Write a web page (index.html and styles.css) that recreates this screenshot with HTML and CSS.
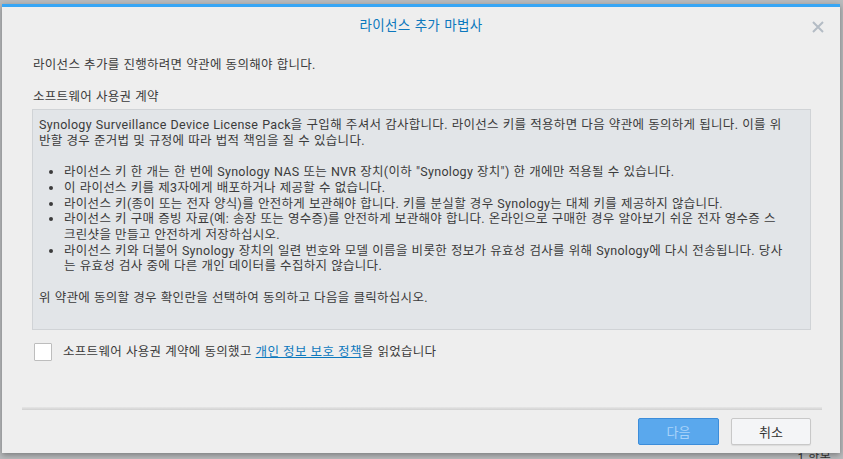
FILE: index.html
```html
<!DOCTYPE html>
<html lang="ko">

<head>
    <meta charset="UTF-8">
    <meta name="viewport" content="width=device-width, initial-scale=1.0">
    <title>라이선스 추가 마법사</title>
    <link rel="stylesheet" href="styles.css">
</head>

<body>
    <div class="wizard">
        <div class="wizard-header">
            <h1>라이선스 추가 마법사</h1>
            <button class="close-btn" type="button" aria-label="닫기">
                <svg width="12" height="12" viewBox="0 0 12 12">
                    <path d="M1 1 L11 11 M11 1 L1 11" stroke="#b4bcc5" stroke-width="2" fill="none" />
                </svg>
            </button>
        </div>

        <div class="wizard-body">
            <p class="intro">라이선스 추가를 진행하려면 약관에 동의해야 합니다.</p>
            <p class="section-title">소프트웨어 사용권 계약</p>

            <div class="eula-box">
                <p>Synology Surveillance Device License Pack을 구입해 주셔서 감사합니다. 라이선스 키를 적용하면 다음 약관에 동의하게 됩니다. 이를 위<br>반할 경우 준거법 및 규정에 따라 법적 책임을 질 수 있습니다.</p>
                <ul>
                    <li>라이선스 키 한 개는 한 번에 Synology NAS 또는 NVR 장치(이하 "Synology 장치") 한 개에만 적용될 수 있습니다.</li>
                    <li>이 라이선스 키를 제3자에게 배포하거나 제공할 수 없습니다.</li>
                    <li>라이선스 키(종이 또는 전자 양식)를 안전하게 보관해야 합니다. 키를 분실할 경우 Synology는 대체 키를 제공하지 않습니다.</li>
                    <li>라이선스 키 구매 증빙 자료(예: 송장 또는 영수증)를 안전하게 보관해야 합니다. 온라인으로 구매한 경우 알아보기 쉬운 전자 영수증 스<br>크린샷을 만들고 안전하게 저장하십시오.</li>
                    <li>라이선스 키와 더불어 Synology 장치의 일련 번호와 모델 이름을 비롯한 정보가 유효성 검사를 위해 Synology에 다시 전송됩니다. 당사<br>는 유효성 검사 중에 다른 개인 데이터를 수집하지 않습니다.</li>
                </ul>
                <p>위 약관에 동의할 경우 확인란을 선택하여 동의하고 다음을 클릭하십시오.</p>
            </div>

            <label class="agree-row">
                <input type="checkbox" class="agree-check">
                <span>소프트웨어 사용권 계약에 동의했고 <a href="#">개인 정보 보호 정책</a>을 읽었습니다</span>
            </label>
        </div>

        <div class="wizard-footer">
            <div class="divider"></div>
            <div class="buttons">
                <button type="button" class="btn btn-next" disabled>다음</button>
                <button type="button" class="btn btn-cancel">취소</button>
            </div>
        </div>
    </div>

    <div class="status-strip">1 항목</div>
</body>

</html>
```

FILE: styles.css
```css
body {
    font-family: Roboto, "Noto Sans CJK KR", sans-serif;
    font-size: 12.5px;
    letter-spacing: 0.3px;
    word-spacing: 0.5px;
    color: #3b3b3b;
    background-color: #b9bbbd;
    margin: 0;
    height: 459px;
    overflow: hidden;
}

.wizard {
    width: 838px;
    height: 449px;
    margin: 4px 0 0 2px;
    background-color: #eeeeee;
    border-top: 3px solid #37a6f5;
    box-sizing: border-box;
    box-shadow: 0 2px 6px rgba(0, 0, 0, 0.35);
    display: flex;
    flex-direction: column;
    position: relative;
    z-index: 1;
}

.wizard-header {
    height: 34px;
    display: flex;
    justify-content: center;
    align-items: center;
}

.wizard-header h1 {
    margin: 0;
    font-size: 13.5px;
    font-weight: normal;
    color: #0c78bd;
    letter-spacing: 0.3px;
}

.close-btn {
    position: absolute;
    top: 14px;
    right: 16px;
    border: none;
    background: none;
    padding: 0;
    width: 12px;
    height: 12px;
    cursor: pointer;
}

.close-btn svg {
    display: block;
}

.wizard-body {
    flex: 1;
    padding: 0 29px 0 30px;
}

.intro {
    margin: 16px 0 0 1px;
    line-height: 16px;
}

.section-title {
    margin: 16px 0 0 1px;
    line-height: 16px;
}

.eula-box {
    margin-top: 4px;
    height: 221px;
    box-sizing: border-box;
    background-color: #e2e5e8;
    border: 1px solid #d0d3d6;
    padding: 7px 6px 0 6px;
    line-height: 15.7px;
    white-space: nowrap;
}

.eula-box p {
    margin: 0;
}

.eula-box ul {
    margin: 15.7px 0;
    padding-left: 25px;
}

.agree-row {
    display: flex;
    align-items: center;
    margin-top: 13px;
    margin-left: 2px;
    line-height: 18px;
}

.agree-check {
    appearance: none;
    width: 18px;
    height: 18px;
    margin: 0 11px 0 0;
    background-color: #fff;
    border: 1px solid #bdbdbd;
    border-radius: 1px;
}

.agree-row a {
    color: #0c78bd;
    text-decoration: underline;
}

.wizard-footer {
    padding-bottom: 8px;
}

.divider {
    height: 3px;
    margin: 0 18px 0 20px;
    background: linear-gradient(#e6e6e6, #d0d0d0);
}

.buttons {
    display: flex;
    justify-content: flex-end;
    gap: 12px;
    margin-top: 8px;
    padding-right: 29px;
}

.btn {
    height: 27px;
    width: 81px;
    font-family: inherit;
    font-size: 13px;
    letter-spacing: 0;
    border-radius: 2px;
    box-sizing: border-box;
}

.btn-next {
    background-color: #5aa8ed;
    border: 1px solid #3c8dda;
    color: #a9d3f9;
}

.btn-cancel {
    width: 80px;
    background-color: #f4f5f7;
    border: 1px solid #c8c8c8;
    color: #333;
    box-shadow: 0 1px 1px rgba(0, 0, 0, 0.08);
}

.status-strip {
    text-align: right;
    padding-right: 12px;
    font-size: 12px;
    line-height: 12px;
    color: #333;
    margin-top: -1px;
}
```
